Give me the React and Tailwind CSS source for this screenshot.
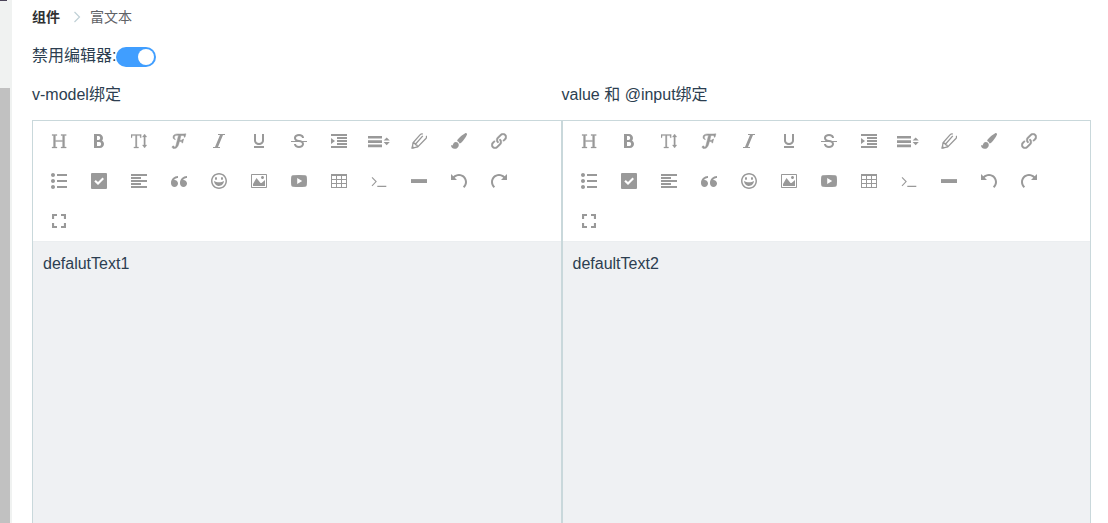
import React from 'react';
import {
  ImBold, ImItalic, ImUnderline, ImStrikethrough, ImIndentIncrease, ImLink,
  ImList2, ImParagraphLeft, ImQuotesLeft, ImHappy, ImImage, ImTable2,
  ImUndo, ImRedo,
} from 'react-icons/im';

function Glyph({ children }) {
  return (
    <svg viewBox="0 0 16 16" className="h-4 w-4" fill="currentColor">
      {children}
    </svg>
  );
}

const Heading = () => (
  <Glyph>
    <path
      d="M1 1.500h5v1H4.400v4.900h7.200V2.500H10v-1h5.200v1h-1.600v11.500h1.600v1H10v-1h1.600V8.500H4.400V14H6v1H1v-1h1.500V2.500H1z"
      stroke="currentColor"
      strokeWidth="0.300"
    />
  </Glyph>
);

const FontSize = () => (
  <Glyph>
    <path
      d="M0 1.500h10.200v3.200h-.9L9 2.600H5.900v11.400h1.600v1H2.900v-1h1.600V2.600H1.200L.9 4.700H0zM13.600 1l2.200 3h-1.500v8h1.500l-2.200 3-2.200-3h1.500V4h-1.500z"
      stroke="currentColor"
      strokeWidth="0.300"
    />
  </Glyph>
);

const FontFamily = () => (
  <Glyph>
    <path
      d="M3.300 1.800C5 .8 6.500.9 8.500 1c2.300.1 4.300.1 6.400-.2l-.9 3.400h-.8c.1-1.200-.3-1.700-1.500-1.700H9.900L8.800 7.200h1.400c.9 0 1.300-.3 1.700-1.200h.7L11.600 10h-.7c.1-1-.2-1.500-1-1.500H8.400l-.7 2.700c-.7 2.800-2.300 4.400-4.500 4.400-1.300 0-2.100-.6-2.100-1.500 0-.7.5-1.200 1.200-1.200.6 0 1 .4 1.200 1.300.8-.1 1.200-.6 1.600-2.200L7.500 2.400C5.300 2.200 3.300 2.700 3.300 4.300c0 .8.300 1.300 1.100 1.700l-.2.600C2.800 6.400 2 5.500 2 4.200c0-1 .4-1.800 1.300-2.400z"
      stroke="currentColor"
      strokeWidth="0.500"
    />
  </Glyph>
);

const LineHeight = () => (
  <svg viewBox="0 0 22 16" className="-ml-px h-4 w-[22px] shrink-0" fill="currentColor">
    <path d="M0 2.900h14v2.700H0zm0 4.300h14v2.700H0zm0 4.400h14v2.700H0zM18.700 4.400l3.100 3.200h-6.200zM15.600 9h6.200l-3.100 3.200z" />
  </svg>
);

const Pencil = () => (
  <Glyph>
    <path
      d="M1.300 15.200 2 9.800 9 1.900M1.300 15.200l5.400-1.300 8.200-8.400M4.400 11.300l7.400-8.400M2.200 10q1.900-.1 2.200 1.500 1.900.1 2.200 2.300M9 1.900Q10.500.3 11.800 1.100M14.900 5.500Q16.300 3.900 15 3.100"
      fill="none"
      stroke="currentColor"
      strokeWidth="1.300"
    />
    <path d="M.3 15.900 1 12.200l2.700 2.700z" />
  </Glyph>
);

const Brush = () => (
  <Glyph>
    <path d="M14.200.3c1-.6 2.200.3 1.700 1.500-.9 2.300-3.500 6-5.700 8-.5.400-1.100.600-1.700.6-.3-1.200-1.100-2.100-2.300-2.500 0-.6.200-1.200.700-1.700C9 4 11.700 1.600 14.200.3zM4.800 8.900c1.700 0 3 1.300 3 3 0 2.400-1.900 3.900-4.300 3.900-2.100 0-3.400-1.200-3.500-3.800.800.6 1.600.6 1.900-.2.500-1.700 1.300-2.900 2.900-2.900z" />
  </Glyph>
);

const Link = () => (
  <span className="[&_path]:stroke-current [&_path]:[stroke-width:0.4]">
    <ImLink />
  </span>
);

const Check = () => (
  <Glyph>
    <path
      fillRule="evenodd"
      d="M1 0h14a1 1 0 0 1 1 1v14a1 1 0 0 1-1 1H1a1 1 0 0 1-1-1V1a1 1 0 0 1 1-1zM3.300 8.400 7 12.100l6-6-1.500-1.500L7 9.100 4.800 6.900z"
    />
  </Glyph>
);

const Video = () => (
  <Glyph>
    <path
      fillRule="evenodd"
      d="M1.800 2.200Q8 1.600 14.200 2.200 15.700 2.400 15.800 4q.4 4 0 8-.1 1.600-1.600 1.800-6.200.6-12.400 0Q.3 13.600.2 12q-.4-4 0-8Q.3 2.400 1.800 2.200zM6.200 5.100v5.800L11.200 8z"
    />
  </Glyph>
);

const Terminal = () => (
  <Glyph>
    <path d="M1 4.300 5.100 8.600 1 12.900M6.300 13.400h9" fill="none" stroke="currentColor" strokeWidth="1.100" />
  </Glyph>
);

const Divider = () => (
  <Glyph>
    <path d="M0 6.100h16v3.900H0z" />
  </Glyph>
);

const FullScreen = () => (
  <Glyph>
    <path d="M1 1h5v2.100H3.100V6H1zM10 1h5v5h-2.100V3.100H10zM1 10h2.100v2.900H6V15H1zM12.900 10H15v5h-5v-2.100h2.900z" />
  </Glyph>
);

const tools = [
  Heading, ImBold, FontSize, FontFamily, ImItalic, ImUnderline, ImStrikethrough,
  ImIndentIncrease, LineHeight, Pencil, Brush, Link,
  ImList2, Check, ImParagraphLeft, ImQuotesLeft, ImHappy, ImImage, Video,
  ImTable2, Terminal, Divider, ImUndo, ImRedo, FullScreen,
];

function Editor({ title, text }) {
  return (
    <section className="flex min-w-0 flex-1 flex-col">
      <h2 className="h-[38px] pt-px text-base leading-6">{title}</h2>
      <div className="flex flex-1 flex-col border border-b-0 border-[#c9d8db]">
        <div className="flex h-[120px] flex-wrap content-start px-1.5 text-[#999]">
          {tools.map((Icon, i) => (
            <button key={i} className="flex h-10 w-10 items-center justify-center text-base">
              <Icon />
            </button>
          ))}
        </div>
        <div className="flex-1 border-t border-[#ebeef0] bg-[#eff1f3] px-2.5 pt-[10px] leading-6">{text}</div>
      </div>
    </section>
  );
}

export default function App() {
  return (
    <div className="flex h-[523px] overflow-hidden bg-white font-['Liberation_Sans','Noto_Sans_CJK_SC',sans-serif] text-base text-[#2c3e50]">
      <aside className="flex w-3 flex-col bg-[#f0f2f1]">
        <div className="h-px w-[7px] bg-[#4b4458]" />
        <div className="mt-[87px] w-2.5 flex-1 bg-[#c1c1c1]" />
      </aside>
      <main className="flex flex-1 flex-col pr-[17px] pl-5">
        <nav className="flex h-[34px] items-center text-sm">
          <span className="font-bold text-[#303133]">组件</span>
          <svg viewBox="0 0 8 12" className="mr-[9px] ml-[13px] h-3 w-2" fill="none" stroke="#c0d0d6" strokeWidth="1.200">
            <path d="M1.500 1l5 5-5 5" />
          </svg>
          <span className="text-[#606266]">富文本</span>
        </nav>
        <div className="flex h-12 items-center">
          <span className="-mt-1">禁用编辑器:</span>
          <button role="switch" aria-checked="true" className="-mt-0.5 flex h-5 w-10 items-center justify-end rounded-full bg-[#409eff] px-0.5">
            <span className="h-4 w-4 rounded-full bg-white" />
          </button>
        </div>
        <div className="flex flex-1">
          <Editor title="v-model绑定" text="defalutText1" />
          <Editor title="value 和 @input绑定" text="defaultText2" />
        </div>
      </main>
    </div>
  );
}
